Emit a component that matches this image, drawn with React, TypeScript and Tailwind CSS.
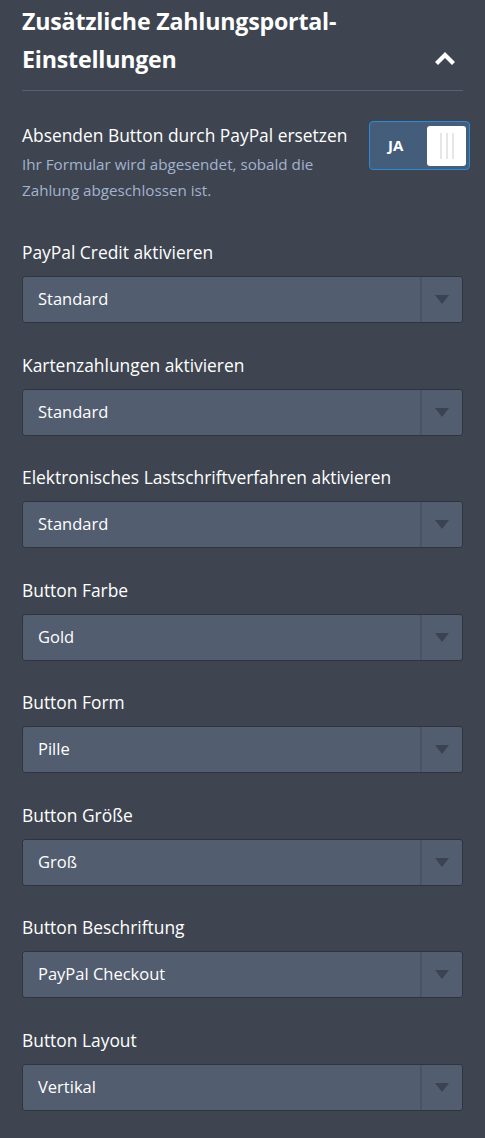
import { useState } from "react";

const fields = [
  { label: "PayPal Credit aktivieren", value: "Standard" },
  { label: "Kartenzahlungen aktivieren", value: "Standard" },
  { label: "Elektronisches Lastschriftverfahren aktivieren", value: "Standard" },
  { label: "Button Farbe", value: "Gold" },
  { label: "Button Form", value: "Pille" },
  { label: "Button Größe", value: "Groß" },
  { label: "Button Beschriftung", value: "PayPal Checkout" },
  { label: "Button Layout", value: "Vertikal" },
];

function SelectBox({ value }: { value: string }) {
  return (
    <div className="flex h-[47px] w-full items-stretch rounded-[3px] border border-[#2f353f] bg-[#535d70]">
      <div className="flex flex-1 items-center pl-[15px] text-[16.5px] text-white">{value}</div>
      <div className="flex w-[42px] items-center justify-center border-l-2 border-[#4a5366]">
        <svg width="14" height="9" viewBox="0 0 14 9">
          <path d="M0 0 L14 0 L7 9 Z" fill="#3b4250" />
        </svg>
      </div>
    </div>
  );
}

export default function App() {
  const [enabled, setEnabled] = useState(true);

  return (
    <div
      className="min-h-[1138px] w-[485px] bg-[#3e4551] px-[22px] text-white"
      style={{ fontFamily: '"Open Sans", "Noto Sans", sans-serif' }}
    >
      <div className="flex items-end justify-between border-b border-[#566070] pb-[12px] pt-[2px]">
        <h2 className="text-[23.2px] font-bold leading-[38px] tracking-[-0.2px]">
          Zusätzliche Zahlungsportal-
          <br />
          Einstellungen
        </h2>
        <svg width="20" height="14" viewBox="0 0 20 14" className="mb-[13px] mr-[8px]">
          <path d="M3 11 L10 4 L17 11" fill="none" stroke="#ffffff" strokeWidth="4.2" strokeLinecap="square" />
        </svg>
      </div>

      <div className="mt-[30px] flex justify-between">
        <div>
          <div className="text-[17.4px] leading-[28px]">Absenden Button durch PayPal ersetzen</div>
          <div className="mt-[2px] text-[15.2px] leading-[26px] text-[#a3b3cd]">
            Ihr Formular wird abgesendet, sobald die
            <br />
            Zahlung abgeschlossen ist.
          </div>
        </div>
        <button
          onClick={() => setEnabled(!enabled)}
          className="mr-[-7px] flex h-[49px] w-[101px] shrink-0 items-center justify-between rounded-[4px] border border-[#2d8ad6] bg-[#445d7b] pl-[18px] pr-[3px]"
        >
          <span className="text-[15px] font-bold text-white">JA</span>
          <span className="flex h-[40px] w-[39px] items-center justify-center gap-[4px] rounded-[3px] bg-white">
            <span className="h-[26px] w-[2px] bg-[#e6e6e6]" />
            <span className="h-[26px] w-[2px] bg-[#e6e6e6]" />
            <span className="h-[26px] w-[2px] bg-[#e6e6e6]" />
          </span>
        </button>
      </div>

      <div className="mt-[37px]">
        {fields.map((f) => (
          <div key={f.label} className="mb-[29.5px]">
            <div className="text-[17.4px] leading-[24px]">{f.label}</div>
            <div className="mt-[12px]">
              <SelectBox value={f.value} />
            </div>
          </div>
        ))}
      </div>
    </div>
  );
}
